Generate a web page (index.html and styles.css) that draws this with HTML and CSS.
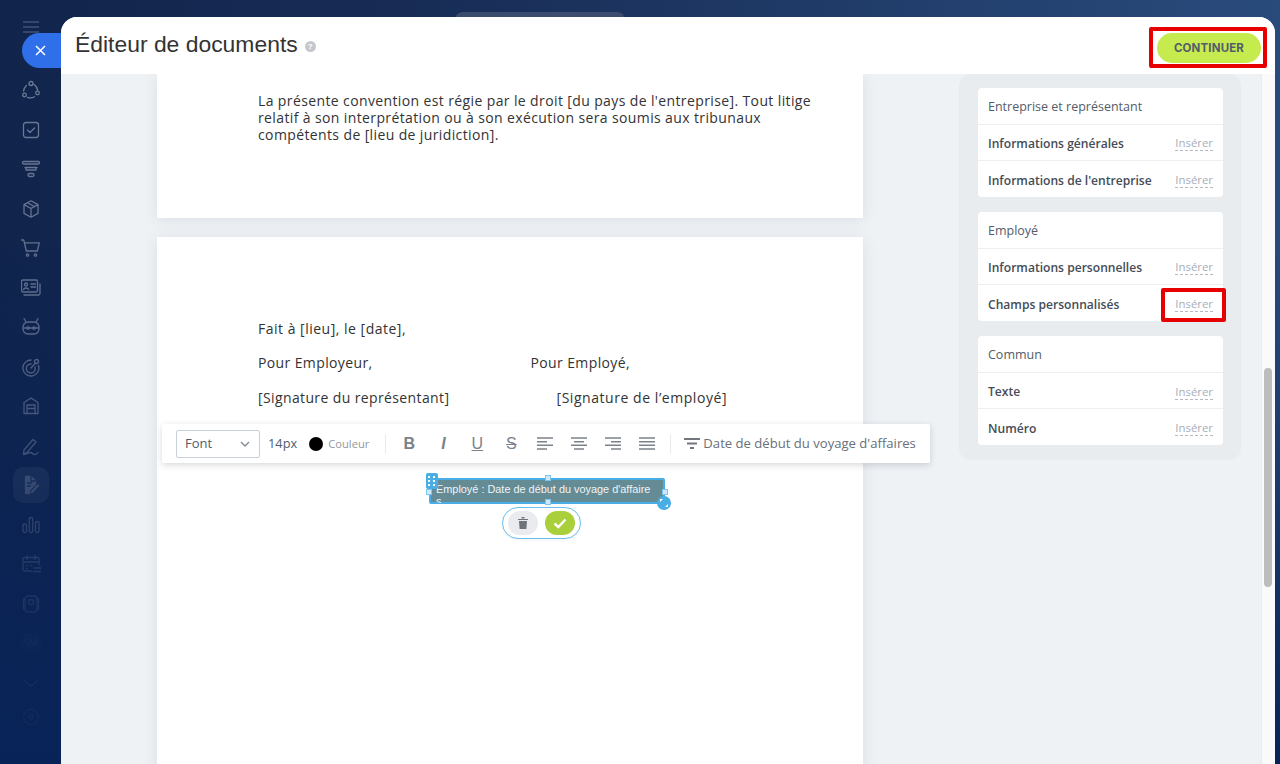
FILE: index.html
```html
<!DOCTYPE html>
<html lang="fr">
<head>
<meta charset="utf-8">
<title>Éditeur de documents</title>
<link rel="stylesheet" href="styles.css">
</head>
<body>
<div class="app">
  <aside class="sidebar">
    <div class="burger"><svg width="18" height="12" viewBox="0 0 18 12"><path d="M1 1h16M1 6h16M1 11h16"/></svg></div>
    <nav class="nav">
      <svg viewBox="0 0 20 20"><circle cx="10" cy="3.5" r="2"/><circle cx="3.5" cy="15" r="1.8"/><circle cx="16.5" cy="13" r="1.8"/><path d="M5.5 5.5A8 8 0 0 0 2.6 11M13 4.5a8 8 0 0 1 3.6 5.8M6.5 17.3a8 8 0 0 0 7-.5"/></svg>
      <svg viewBox="0 0 20 20"><rect x="2.5" y="2.5" width="15" height="15" rx="2.5"/><path d="M6.5 10l2.5 2.5 4.5-4.5"/></svg>
      <svg viewBox="0 0 20 20"><rect x="1.5" y="2.5" width="17" height="2.5" rx="1.2"/><path d="M4 8.5h12M5 8.5v2.5M15 8.5v2.5M5 11h10"/><rect x="7" y="14.5" width="6" height="3" rx="1.4"/></svg>
      <svg viewBox="0 0 20 20"><path d="M10 1.8l7 3.8v8.8l-7 3.8-7-3.8V5.6zM3 5.6l7 3.9 7-3.9M10 9.5v8.7M6.5 3.7l7 3.9"/></svg>
      <svg viewBox="0 0 20 20"><path d="M.5 2h2.2l2.6 11h11l2-8.200H4"/><circle cx="6.500" cy="17" r="1.200"/><circle cx="14.500" cy="17" r="1.200"/></svg>
      <svg viewBox="0 0 20 20"><rect x=".5" y="2" width="16" height="12" rx="1.500"/><path d="M19 6v9.500a1.500 1.500 0 0 1-1.500 1.500H3"/><circle cx="5" cy="6.500" r="1.500"/><path d="M2.500 11.500c.5-2 4.500-2 5 0M10 6h4.500M10 9h4.500"/></svg>
      <svg viewBox="0 0 20 20"><path d="M5 5L3 1.500M15 5l2-3.500"/><rect x="2" y="5" width="16" height="12" rx="5"/><path d="M2.500 11h15"/><circle cx="7" cy="11" r="1.200"/><circle cx="13" cy="11" r="1.200"/></svg>
      <svg viewBox="0 0 20 20"><path d="M10 3a8 8 0 1 0 7.500 5.500"/><path d="M10 7a4.500 4.500 0 1 0 4 3"/><path d="M10 11l4.500-5"/><circle cx="15.500" cy="4.500" r="2"/></svg>
      <svg viewBox="0 0 20 20"><path d="M3 17.500V6.500L10 2l7 4.500v11zM6 17.500V9h8v8.500M6 12.500h8"/></svg>
      <svg viewBox="0 0 20 20"><path d="M3 14l9-10.500 3 2.500-9 10.500-3.500 1zM2.500 18.500c4-.5 4-2 7-2 2 0 2 2 4 2s3-1 3.500-2"/></svg>
      <div class="nav-active"><svg viewBox="0 0 20 20"><path class="solid" d="M4.500 1.500h5.500l4.500 4.500v3l-6 6.500v3h-4z"/><path class="cut" d="M10 1.500V6h4.500M6.500 8h4M6.500 11h3"/><path class="pencil" d="M11 17l6-6.500"/></svg></div>
      <svg viewBox="0 0 20 20"><rect x="2" y="9" width="3.500" height="8.500" rx="1.500"/><rect x="8.200" y="2.500" width="3.500" height="15" rx="1.500"/><rect x="14.500" y="6.500" width="3.500" height="11" rx="1.500"/></svg>
      <svg viewBox="0 0 20 20"><path d="M11 17H3.500A1.500 1.500 0 0 1 2 15.500V5a1.500 1.500 0 0 1 1.500-1.500h13A1.500 1.500 0 0 1 18 5v6M6 1.500v4M14 1.500v4M2 8h16M13 14h7M13 17.500h7M5.500 11.500h.5M9.500 11.500h.5M5.500 14.500h.5"/></svg>
      <svg viewBox="0 0 20 20"><rect x="4" y="2" width="12" height="16" rx="3"/><circle cx="10" cy="8" r="2.500"/><path d="M4 5H2.500v10H4M16 5h1.500v10H16"/></svg>
      <div class="nav-sm">SM</div>
      <svg viewBox="0 0 20 20"><path d="M3 7l7 6.500L17 7"/></svg>
    </nav>
    <div class="nav-bottom"><svg viewBox="0 0 20 20"><circle cx="10" cy="10" r="7.500"/><circle cx="10" cy="10" r="2"/></svg></div>
  </aside>

  <section class="modal">
    <header class="modal-head">
      <div class="title-group">
        <h1 class="title">Éditeur de documents</h1>
        <span class="help">?</span>
      </div>
      <div class="red-frame"><button class="continue" type="button">CONTINUER</button></div>
    </header>

    <div class="modal-body">
      <div class="canvas">
        <article class="page page-first">
          <p class="doc-text">La présente convention est régie par le droit [du pays de l'entreprise]. Tout litige relatif à son interprétation ou à son exécution sera soumis aux tribunaux compétents de [lieu de juridiction].</p>
        </article>
        <article class="page page-second">
          <p class="doc-line">Fait à [lieu], le [date],</p>
          <div class="doc-sign"><span class="col-a">Pour Employeur,</span><span>Pour Employé,</span></div>
          <div class="doc-sign"><span class="col-a">[Signature du représentant]</span><span class="col-b">[Signature de l’employé]</span></div>

          <div class="toolbar">
            <div class="select"><span>Font</span><svg width="10" height="6" viewBox="0 0 10 6"><path d="M1 1l4 4 4-4"/></svg></div>
            <span class="size">14px</span>
            <span class="dot"></span>
            <span class="color-label">Couleur</span>
            <span class="sep sep-a"></span>
            <span class="fmt fmt-b">B</span>
            <span class="fmt fmt-i">I</span>
            <span class="fmt fmt-u">U</span>
            <span class="fmt fmt-s">S</span>
            <svg class="align" viewBox="0 0 16 13"><path d="M0 1h16M0 4.700h10M0 8.300h16M0 12h10"/></svg>
            <svg class="align" viewBox="0 0 16 13"><path d="M0 1h16M3 4.700h10M0 8.300h16M3 12h10"/></svg>
            <svg class="align" viewBox="0 0 16 13"><path d="M0 1h16M6 4.700h10M0 8.300h16M6 12h10"/></svg>
            <svg class="align align-last" viewBox="0 0 16 13"><path d="M0 1h16M0 4.700h16M0 8.300h16M0 12h16"/></svg>
            <span class="sep sep-b"></span>
            <svg class="filter" viewBox="0 0 16 12"><path d="M0 1.100h16M3 5.500h10M6 10h4"/></svg>
            <span class="field-name">Date de début du voyage d'affaires</span>
          </div>

          <div class="field">
            <div class="field-text">Employé : Date de début du voyage d'affaires</div>
            <span class="drag"><svg width="10" height="12" viewBox="0 0 10 12"><path d="M1 1h2v2H1zM6 1h2v2H6zM1 5h2v2H1zM6 5h2v2H6zM1 9h2v2H1zM6 9h2v2H6z"/></svg></span>
            <span class="handle h-top"></span>
            <span class="handle h-bottom"></span>
            <span class="handle h-left"></span>
            <span class="handle h-right"></span>
            <span class="resize"><svg width="10" height="10" viewBox="0 0 10 10"><path d="M1 1h3L1 4zM9 9H6l3-3z"/></svg></span>
          </div>
          <div class="field-actions">
            <button class="act act-del" type="button"><svg width="10" height="12" viewBox="0 0 10 12"><path d="M0 2h10v1H0zM3.500 0h3v1.500h-3zM1 4h8l-.6 8H1.600z"/></svg></button>
            <button class="act act-ok" type="button"><svg width="14" height="11" viewBox="0 0 14 11"><path d="M1.500 5.500l3.800 3.500L12.500 1.500"/></svg></button>
          </div>
        </article>
      </div>

      <aside class="panel">
        <div class="card">
          <div class="card-head">Entreprise et représentant</div>
          <div class="row"><span class="row-name">Informations générales</span><span class="ins">Insérer</span></div>
          <div class="row"><span class="row-name">Informations de l'entreprise</span><span class="ins">Insérer</span></div>
        </div>
        <div class="card">
          <div class="card-head">Employé</div>
          <div class="row"><span class="row-name">Informations personnelles</span><span class="ins">Insérer</span></div>
          <div class="row"><span class="row-name">Champs personnalisés</span><span class="ins ins-marked">Insérer</span></div>
        </div>
        <div class="card">
          <div class="card-head">Commun</div>
          <div class="row"><span class="row-name">Texte</span><span class="ins">Insérer</span></div>
          <div class="row"><span class="row-name">Numéro</span><span class="ins">Insérer</span></div>
        </div>
      </aside>

      <div class="scrolltrack"><div class="scrollthumb"></div></div>
    </div>
  </section>
  <div class="top-pill"></div>
  <button class="close" type="button"><svg width="11" height="11" viewBox="0 0 11 11"><path d="M1 1l9 9M10 1l-9 9"/></svg></button>
</div>
</body>
</html>
```

FILE: styles.css
```css
* { box-sizing: border-box; }
html, body { margin: 0; height: 100%; overflow: hidden; }
body { font-family: "Open Sans", "Liberation Sans", sans-serif; color: #333; }

.app {
  position: relative;
  display: flex;
  width: 1280px;
  height: 764px;
  padding-right: 5px;
  overflow: hidden;
  background:
    linear-gradient(180deg, rgba(8, 30, 84, 0) 30%, #082358 100%),
    linear-gradient(90deg, #10244c 0%, #172b54 30%, #294b7c 100%);
}

/* Sidebar */
.sidebar { position: relative; flex: 0 0 61px; display: flex; flex-direction: column; align-items: center; padding-left: 1px; }
.burger { height: 47px; padding-top: 21px; opacity: .35; }
.burger svg { display: block; fill: none; stroke: #9aa6bd; stroke-width: 1.500; }
.nav {
  margin-top: 33px;
  display: flex;
  flex-direction: column;
  align-items: center;
  gap: 19.500px;
  -webkit-mask-image: linear-gradient(180deg, #000 0%, rgba(0,0,0,.85) 35%, rgba(0,0,0,.1) 92%);
  mask-image: linear-gradient(180deg, #000 0%, rgba(0,0,0,.85) 35%, rgba(0,0,0,.1) 92%);
}
.nav svg, .nav-bottom svg { display: block; width: 20px; height: 20px; fill: none; stroke: #6d7b97; stroke-width: 1.300; stroke-linecap: round; stroke-linejoin: round; }
.nav-active { width: 36px; height: 36px; margin: -8px 0; border-radius: 10px; background: rgba(255,255,255,.1); display: flex; align-items: center; justify-content: center; }
.nav-active .solid { fill: #6d7b97; }
.nav-active .cut { stroke: #1d3a6b; }
.nav-active .pencil { stroke-width: 2.400; }
.nav-sm { width: 22px; height: 22px; margin: -1px 0; border-radius: 50%; font-size: 9px; line-height: 22px; text-align: center; color: #6c7a95; background: rgba(255,255,255,.1); }
.nav-bottom { margin-top: 14px; opacity: .08; }

.close {
  position: absolute;
  left: 22px;
  top: 33px;
  width: 39px;
  height: 35px;
  padding: 0 2px 1px 0;
  border: 0;
  border-radius: 18px 0 0 18px;
  background: #2f6fea;
  display: flex;
  align-items: center;
  justify-content: center;
}
.close svg { fill: none; stroke: #fff; stroke-width: 1.500; }
.top-pill { position: absolute; left: 455px; top: 12px; width: 170px; height: 12px; border-radius: 8px 8px 0 0; background: #3b4c6e; }

/* Modal */
.modal { flex: 1; margin-top: 17px; display: flex; flex-direction: column; background: #eef2f5; border-radius: 16px 16px 0 0; overflow: hidden; position: relative; z-index: 1; }
.modal-head { flex: 0 0 57px; display: flex; align-items: flex-start; justify-content: space-between; padding: 10px 8px 0 14px; background: #fff; position: relative; z-index: 3; }
.title-group { display: flex; align-items: center; gap: 7px; padding-top: 1px; }
.title { margin: 0; font: 400 22.900px/32px "Liberation Sans", sans-serif; color: #333; }
.help { width: 11px; height: 11px; margin-top: 4px; border-radius: 50%; background: #c4c8cd; color: #fff; font: 700 8px/11px "Liberation Sans", sans-serif; text-align: center; }
.red-frame { padding: 2px 2px 0 4px; height: 41px; border: 4px solid #e60000; border-radius: 2px; }
.continue { display: block; width: 104px; height: 30px; padding: 0; border: 0; border-radius: 15px; background: #c5eb4e; color: #535c69; font: 700 11.500px/30px Inter, "Open Sans", sans-serif; letter-spacing: .15px; }

.modal-body { flex: 1; min-height: 0; display: flex; align-items: flex-start; }
.canvas { flex: 0 0 898px; height: 100%; padding-left: 96px; }

.page { position: relative; width: 706px; background: #fff; box-shadow: 0 2px 14px rgba(60, 70, 85, .1); font-size: 14px; line-height: 17px; letter-spacing: .38px; color: #333; }
.page-first { height: 144px; padding: 18px 50px 0 101px; }
.page-second { height: 600px; margin-top: 19px; padding: 83px 50px 0 101px; }
.doc-text { margin: 0; }
.doc-line { margin: 0 0 17.300px; letter-spacing: .5px; }
.doc-sign { display: flex; margin-bottom: 17.600px; }
.col-a { flex: 0 0 272.500px; }
.col-b { margin-left: 26px; letter-spacing: .55px; }

/* Toolbar */
.toolbar { position: absolute; left: 5px; top: 187px; width: 768px; height: 39px; background: #fff; border-radius: 2px; box-shadow: 0 2px 6px rgba(50, 60, 75, .2); display: flex; align-items: center; padding-left: 14px; color: #6a6f78; letter-spacing: 0; z-index: 2; }
.select { flex: 0 0 84px; height: 28px; border: 1px solid #c9d0d9; border-radius: 2px; display: flex; align-items: center; justify-content: space-between; padding: 0 9px 0 8px; font-size: 13px; color: #535c69; }
.select svg { fill: none; stroke: #80868e; stroke-width: 1.300; }
.size { flex: none; margin-left: 8px; font-size: 12.800px; color: #535c69; }
.dot { flex: 0 0 14px; width: 14px; height: 14px; margin-left: 12px; border-radius: 50%; background: #000; }
.color-label { flex: none; margin-left: 5px; font-size: 11.200px; color: #9298a1; }
.sep { flex: 0 0 1px; width: 1px; height: 20px; background: #e8eaed; }
.sep-a { margin-left: 16px; }
.sep-b { margin-left: 15px; }
.fmt { flex: 0 0 14px; margin-right: 20px; font: 700 16px/1 "Liberation Sans", sans-serif; color: #7c828b; text-align: center; }
.fmt-b { margin-left: 16px; }
.fmt-i { font-style: italic; }
.fmt-u { text-decoration: underline; font-weight: 400; }
.fmt-s { text-decoration: line-through; font-weight: 400; margin-right: 19px; }
.align { flex: 0 0 16px; width: 16px; height: 13px; margin-right: 18px; fill: none; stroke: #7c828b; stroke-width: 1.500; }
.align-last { margin-right: 0; }
.filter { flex: 0 0 16px; width: 16px; height: 12px; margin-left: 13px; fill: none; stroke: #72777f; stroke-width: 2; }
.field-name { flex: none; margin-left: 3px; font-size: 13.100px; white-space: nowrap; color: #6a6f78; }

/* Placed field */
.field { position: absolute; left: 272px; top: 241px; width: 236px; height: 26px; background: #658b95; border: 2px solid #49ade6; border-radius: 2px; letter-spacing: 0; z-index: 2; }
.field-text { height: 23px; padding: 2.500px 10px 0 5px; overflow: hidden; word-break: break-all; font: 10.900px/12px "Liberation Sans", sans-serif; color: #eef4f5; }
.drag { position: absolute; left: -5px; top: -7px; width: 12px; height: 16px; background: #49ade6; border-radius: 2px; display: flex; align-items: center; justify-content: center; }
.drag svg { fill: #fff; }
.handle { position: absolute; width: 6px; height: 6px; background: #cfe9f8; border: 1px solid #7cc5ee; }
.h-top { left: 114px; top: -5px; }
.h-bottom { left: 114px; top: 19px; }
.h-left { left: -5px; top: 9px; }
.h-right { right: -5px; top: 9px; }
.resize { position: absolute; right: -8px; bottom: -8px; width: 14px; height: 14px; border-radius: 50%; background: #49ade6; display: flex; align-items: center; justify-content: center; }
.resize svg { fill: #fff; }
.field-actions { position: absolute; left: 345px; top: 270px; width: 79px; height: 32px; border: 1px solid #6ac0ef; border-radius: 16px; background: #fff; display: flex; align-items: center; gap: 7px; padding-left: 5px; box-shadow: 0 1px 3px rgba(0,0,0,.06); z-index: 2; }
.act { width: 30px; height: 24px; padding: 0; border: 0; border-radius: 12px; display: flex; align-items: center; justify-content: center; }
.act-del { background: #e9ebee; }
.act-del svg { fill: #6f747c; }
.act-ok { background: #a9cf3a; }
.act-ok svg { fill: none; stroke: #fff; stroke-width: 2.400; }

/* Right panel */
.panel { flex: 0 0 282px; margin-top: 0; padding: 14px 18px 15px 19px; background: #e8ecef; border-radius: 12px; display: flex; flex-direction: column; gap: 15px; }
.card { background: #fff; border-radius: 4px; }
.card-head { height: 35.500px; padding: 0 10px; font-size: 12.500px; font-weight: 500; line-height: 37.500px; color: #535c69; }
.row { height: 36.800px; border-top: 1px solid #edeff2; padding: 2px 10px 0; display: flex; align-items: center; justify-content: space-between; }
.row-name { font-size: 12.100px; font-weight: 600; color: #454c56; }
.ins { position: relative; font-size: 11.400px; line-height: 15px; color: #a8aeb8; border-bottom: 1px dashed #b4b9c2; }
.ins-marked::after { content: ""; position: absolute; left: -14px; right: -13px; top: -8px; bottom: -11px; border: 4px solid #e60000; border-radius: 2px; }

.scrolltrack { flex: 0 0 14px; height: 100%; margin-left: 20px; background: #fafafa; border-left: 1px solid #e9ebee; padding: 294px 3px 0 2px; }
.scrollthumb { width: 8px; height: 219px; background: #bdbdbd; border-radius: 4px; }
```
